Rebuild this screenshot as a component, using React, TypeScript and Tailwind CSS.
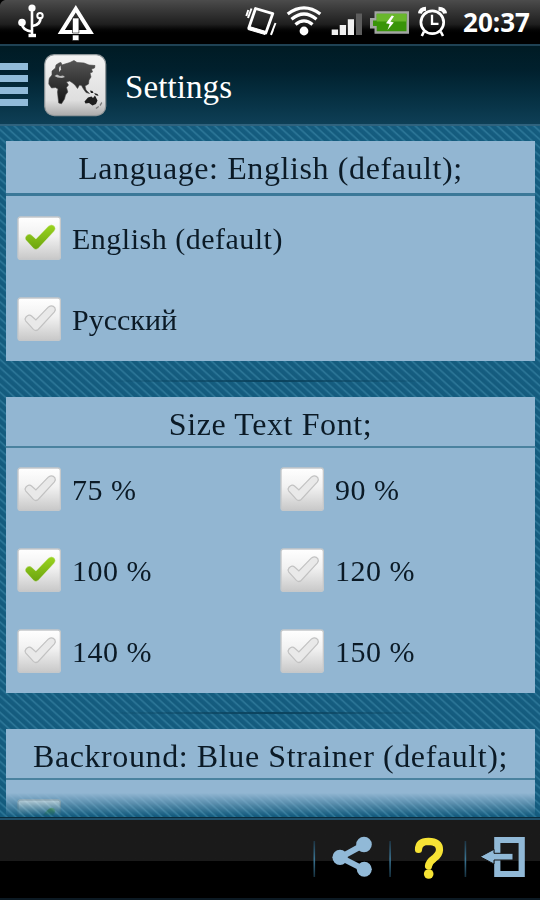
import clsx from "clsx";
import React from "react";

type Option = { label: string; checked?: boolean; className?: string };

const LANGUAGES: Option[] = [
  { label: "English (default)", checked: true },
  { label: "Русский", className: "tracking-normal" },
];

const FONT_SIZES: Option[] = [
  { label: "75 %" },
  { label: "90 %" },
  { label: "100 %", checked: true },
  { label: "120 %" },
  { label: "140 %" },
  { label: "150 %" },
];

function StatusBar() {
  return (
    <div className="flex h-11 shrink-0 items-center justify-between bg-linear-to-b from-[#4c4c4c] via-[#1f1f1f] via-55% to-black to-80% pr-2.5">
      <svg width="110" height="44" viewBox="0 0 110 44" fill="none" stroke="#fff">
        <path d="M0 0H5Q1 1 0 5Z" fill="#000" stroke="none" />
        <circle cx="32" cy="8" r="3.6" fill="#fff" stroke="none" />
        <path d="M32 8V35M22 23Q22 30 31.5 31.5M40.5 17Q41 25 32.5 26" strokeWidth="2.6" />
        <circle cx="22" cy="22.5" r="3.8" fill="#fff" stroke="none" />
        <circle cx="40" cy="15.8" r="2.7" strokeWidth="2" />
        <path d="M28.5 33.8h7.5v3.4h-7.5z" fill="#fff" stroke="none" />
        <path d="M75.8 8.8L90.3 32H61.3Z" strokeWidth="4" />
        <path d="M72.5 18h6.4v15h-6.4zM72.5 35h6.4v5.5h-6.4z" fill="#fff" stroke="#111" strokeWidth=".6" />
      </svg>
      <div className="flex items-center">
        <svg width="214" height="44" viewBox="239 0 214 44" fill="none" stroke="#fff">
          <path d="M255.5 8.5L272.8 13.6L265.8 33L248.8 28Z" strokeWidth="2.8" strokeLinejoin="round" />
          <path d="M249.3 26.5L266 31.5L265 34.5L248 29.5Z" fill="#fff" strokeWidth="1" />
          <path d="M251.5 8.5L248 18M248.3 10L246.3 16M275.5 23L271 34.5M273 30l-2 5" strokeWidth="2" />
          <circle cx="304" cy="31" r="4.4" fill="#fff" stroke="none" />
          <path d="M295.5 24.5Q304 17.2 312.5 24.5M291.5 19.2Q304 8.8 316.5 19.2M287.7 14Q304 1.8 320.3 14" strokeWidth="3.3" />
          <g stroke="none">
            <path d="M331.7 29.5h6.4v5.5h-6.4zM339.7 25h6.4v10h-6.4zM347.8 19.3h6.2v15.7h-6.2z" fill="#f1f1f1" />
            <path d="M356 13.5h6V35h-6z" fill="#5d5d5d" />
            <path d="M374.5 11.3H409V33.7H374.5V28.6H370V18H374.5Z" fill="#a3a5a3" />
            <path d="M376.7 13.8H406.5V31.2H376.7V26H373V20.5H376.7Z" fill="#399409" />
            <path d="M376.7 13.8H406.5V21.5H376.7Z" fill="#69b72c" />
            <path d="M391.8 15.5L386 23.2L389.7 24L387.5 30L393.8 22.5L390.4 21.5L394 16.2Z" fill="#fff" />
          </g>
          <circle cx="432.3" cy="22.3" r="11.4" strokeWidth="2.7" />
          <path d="M432 14.8V23.8H438.5" strokeWidth="2.3" />
          <path d="M420 13.5Q420.5 9 426 8.7M438.5 8.7Q444.5 9 445 13.5" strokeWidth="4" />
          <path d="M424 31.5L421.8 36M440.7 31.5L443 36" strokeWidth="2.6" />
        </svg>
        <span className="ml-2.5 font-['Open_Sans','Noto_Sans',sans-serif] text-[26px] leading-11 font-bold text-white">
          20:37
        </span>
      </div>
    </div>
  );
}

function AppIcon() {
  return (
    <svg width="64" height="64" viewBox="43 52 64 64" className="ml-[15px]">
      <defs>
        <linearGradient id="tile" x1="0" y1="0" x2="0" y2="1">
          <stop offset="0" stopColor="#f4f4f4" />
          <stop offset=".75" stopColor="#dedede" />
          <stop offset="1" stopColor="#aaa" />
        </linearGradient>
        <linearGradient id="land" x1="0" y1="0" x2="0" y2="1">
          <stop offset="0" stopColor="#555" />
          <stop offset="1" stopColor="#141414" />
        </linearGradient>
      </defs>
      <rect x="44.7" y="53.7" width="61" height="61" rx="9.5" fill="url(#tile)" stroke="#8f9699" strokeWidth="1.2" />
      <path
        fill="url(#land)"
        stroke="#444"
        strokeWidth=".6"
        d="M49.5 77L52 74L52 70L55.5 67L56 64L59 62L61 61.5L62 64L65 63L70 61.5L74 59.5L77 61.5L84 62L89 64L95 64.5L94.5 67L91.5 68L92.5 71L90 72L91 76L89 79L88.5 83L85 85L86 89L89.5 92.5L86 91.5L83.5 88L81.5 84.5L79.5 84L77.5 87.5L75 84L72 81.5L69.5 80L66.5 81L68.5 84L66.5 86.5L67.8 91L65.5 94L64.5 98L61.5 102.8L58.7 102L58 96L57.5 91L58 88L55.5 86.5L51.5 87L48.8 83L49 79Z"
      />
      <path fill="#bdbdbd" d="M54.5 75L57 73.5L60 75L63 74.5L65 76L62 77L57.5 76.5Z" />
      <path fill="#d5d5d5" d="M59 66.5l1.5-2 .6 4-2 2.5z" />
      <path fill="#1d1d1d" d="M84.5 100.5L88 96.5L91.5 95.5L93 97L95 94.5L97.5 99.5L96 103L92.5 104.5L89 102L85.5 102.5ZM90 89.5l2.5.5 1 2-2.5 0zM94 92l3.5 1 1 2-3-1z" />
      <path fill="#777" d="M99.5 104l2-3 .8 1-1.8 3zM95.5 107l3-2 .5 1-2.5 2z" />
    </svg>
  );
}

function Header() {
  return (
    <div className="flex h-[82px] shrink-0 items-center border-t-2 border-b-2 border-t-[#1f4254] border-b-[#2f637e] bg-linear-to-b from-[#001b24] via-[#01202d] via-30% to-[#0e3f56] pb-px">
      <div className="flex w-7 flex-col gap-[5px]">
        {[0, 1, 2, 3].map((i) => (
          <span key={i} className="h-[7px] bg-[#91bbd9]" />
        ))}
      </div>
      <AppIcon />
      <h1 className="mt-1 ml-[18px] text-[33px] leading-10 tracking-[0.1px] text-white">Settings</h1>
    </div>
  );
}

function Checkbox({ checked }: { checked?: boolean }) {
  return (
    <svg width="44" height="44" viewBox="0 0 44 44" className="shrink-0">
      <defs>
        <linearGradient id="box" x1="0" y1="0" x2="0" y2="1">
          <stop offset="0" stopColor="#fff" />
          <stop offset=".45" stopColor="#f1f1f1" />
          <stop offset="1" stopColor="#c8c8c8" />
        </linearGradient>
        <linearGradient id="tick" x1="0" y1="0" x2="0" y2="1">
          <stop offset="0" stopColor="#9ad41f" />
          <stop offset="1" stopColor="#6ca40f" />
        </linearGradient>
      </defs>
      <rect x="1" y="1" width="42.4" height="42.4" rx="2.5" fill="url(#box)" stroke="#c5c8ca" strokeWidth="1.4" />
      <path
        d="M9 20Q12 16.6 14.8 19.2L18.9 23L31.5 9.9Q35.3 7.4 37.8 10.6Q39 12.6 37.4 14.9L21.2 32.5Q18.7 34.6 16.4 32.3L8.6 23.8Q7.4 21.9 9 20Z"
        fill={checked ? "url(#tick)" : "#e9e9e9"}
        stroke={checked ? "#f5f5f5" : "#c2c2c2"}
        strokeWidth={checked ? 0.4 : 1.2}
      />
    </svg>
  );
}

function OptionRow({ label, checked, className }: Option) {
  return (
    <label className="flex h-[81px] items-center">
      <Checkbox checked={checked} />
      <span className={clsx("mt-[3px] ml-[11px] text-[30px] leading-9", className ?? "tracking-[0.5px]")}>
        {label}
      </span>
    </label>
  );
}

interface PanelProps {
  title: string;
  className?: string;
  children: React.ReactNode;
}

function Panel({ title, className, children }: PanelProps) {
  return (
    <section className={clsx("mr-[5px] ml-1.5 bg-[#92b6d2] text-[#0b1a26]", className)}>
      <h2 className="flex h-[49px] items-center justify-center pt-1 text-[32px] leading-8.5 tracking-[0.6px] whitespace-nowrap">
        {title}
      </h2>
      {children}
    </section>
  );
}

function Divider() {
  return (
    <div className="flex h-9 shrink-0 items-center justify-center pt-[3px]">
      <div className="h-0.5 w-[340px] bg-linear-to-r from-transparent via-[#0b415b] to-transparent" />
    </div>
  );
}

function Footer() {
  return (
    <div className="h-[83px] shrink-0 border-t border-b-2 border-t-[#0a2c3c] border-b-[#0c1a24] bg-black">
      <div className="h-full border-t-2 border-[#21506a] bg-linear-to-b from-[#1a1a1a] from-52% to-black to-53%">
        <svg width="240" height="78" viewBox="300 820 240 78" className="ml-auto" fill="none">
          <defs>
            <linearGradient id="sep" x1="0" y1="0" x2="0" y2="1">
              <stop offset="0" stopColor="#1d3544" />
              <stop offset=".5" stopColor="#3b7594" />
              <stop offset="1" stopColor="#16303e" />
            </linearGradient>
          </defs>
          <path d="M313.5 841h1.6v36h-1.6zM389.3 841h1.6v36h-1.6zM464.6 841h1.6v36h-1.6z" fill="url(#sep)" />
          <path d="M364 844.5L340.5 857.3L364 869.3" stroke="#91b9d7" strokeWidth="6" />
          <g fill="#91b9d7">
            <circle cx="340" cy="857.3" r="7.6" />
            <circle cx="364" cy="844.5" r="7.8" />
            <circle cx="364.3" cy="869.3" r="7.5" />
          </g>
          <path d="M418.5 849.5Q418.5 841.5 428.5 841.3Q439.8 841.5 439.5 850Q439.3 854.5 434 858.5Q429 862 428.5 866" stroke="#f6e335" strokeWidth="7.2" strokeLinecap="round" />
          <circle cx="428.7" cy="874" r="4.8" fill="#f6e335" />
          <path d="M497.3 840H521.7V874H497.3Z" stroke="#91b9d7" strokeWidth="6.2" />
          <path d="M480 856.7L494 849.3V853.3H513V860H494V864Z" fill="#91b9d7" stroke="#141414" strokeWidth="1" />
        </svg>
      </div>
    </div>
  );
}

export default function App() {
  return (
    <div className="flex h-[900px] w-[540px] flex-col overflow-hidden bg-black font-['Liberation_Serif',serif]">
      <StatusBar />
      <Header />
      <main className="h-[691px] shrink-0 overflow-hidden bg-[#155e81] bg-[repeating-linear-gradient(42deg,#145b7d_0px,#155d80_3px,#2e7899_4.6px,#145b7d_6.1px)]">
        <div className="h-full overflow-hidden pt-[15px] mask-[linear-gradient(to_bottom,#000_667px,transparent_690px)]">
          <Panel title="Language: English (default);" className="h-[220px]">
            <div className="mt-[3px] border-t-3 border-[#3b7898] pt-px pl-[11px]">
              {LANGUAGES.map((item) => (
                <OptionRow key={item.label} {...item} />
              ))}
            </div>
          </Panel>
          <Divider />
          <Panel title="Size Text Font;" className="h-[296px]">
            <div className="grid grid-cols-[263px_1fr] border-t-2 border-[#4a829f] pl-[11px]">
              {FONT_SIZES.map((item) => (
                <OptionRow key={item.label} {...item} />
              ))}
            </div>
          </Panel>
          <Divider />
          <Panel title="Backround: Blue Strainer (default);" className="h-[296px]">
            <div className="border-t-2 border-[#4a829f] pl-[11px]">
              <OptionRow label="" checked />
            </div>
          </Panel>
        </div>
      </main>
      <Footer />
    </div>
  );
}
